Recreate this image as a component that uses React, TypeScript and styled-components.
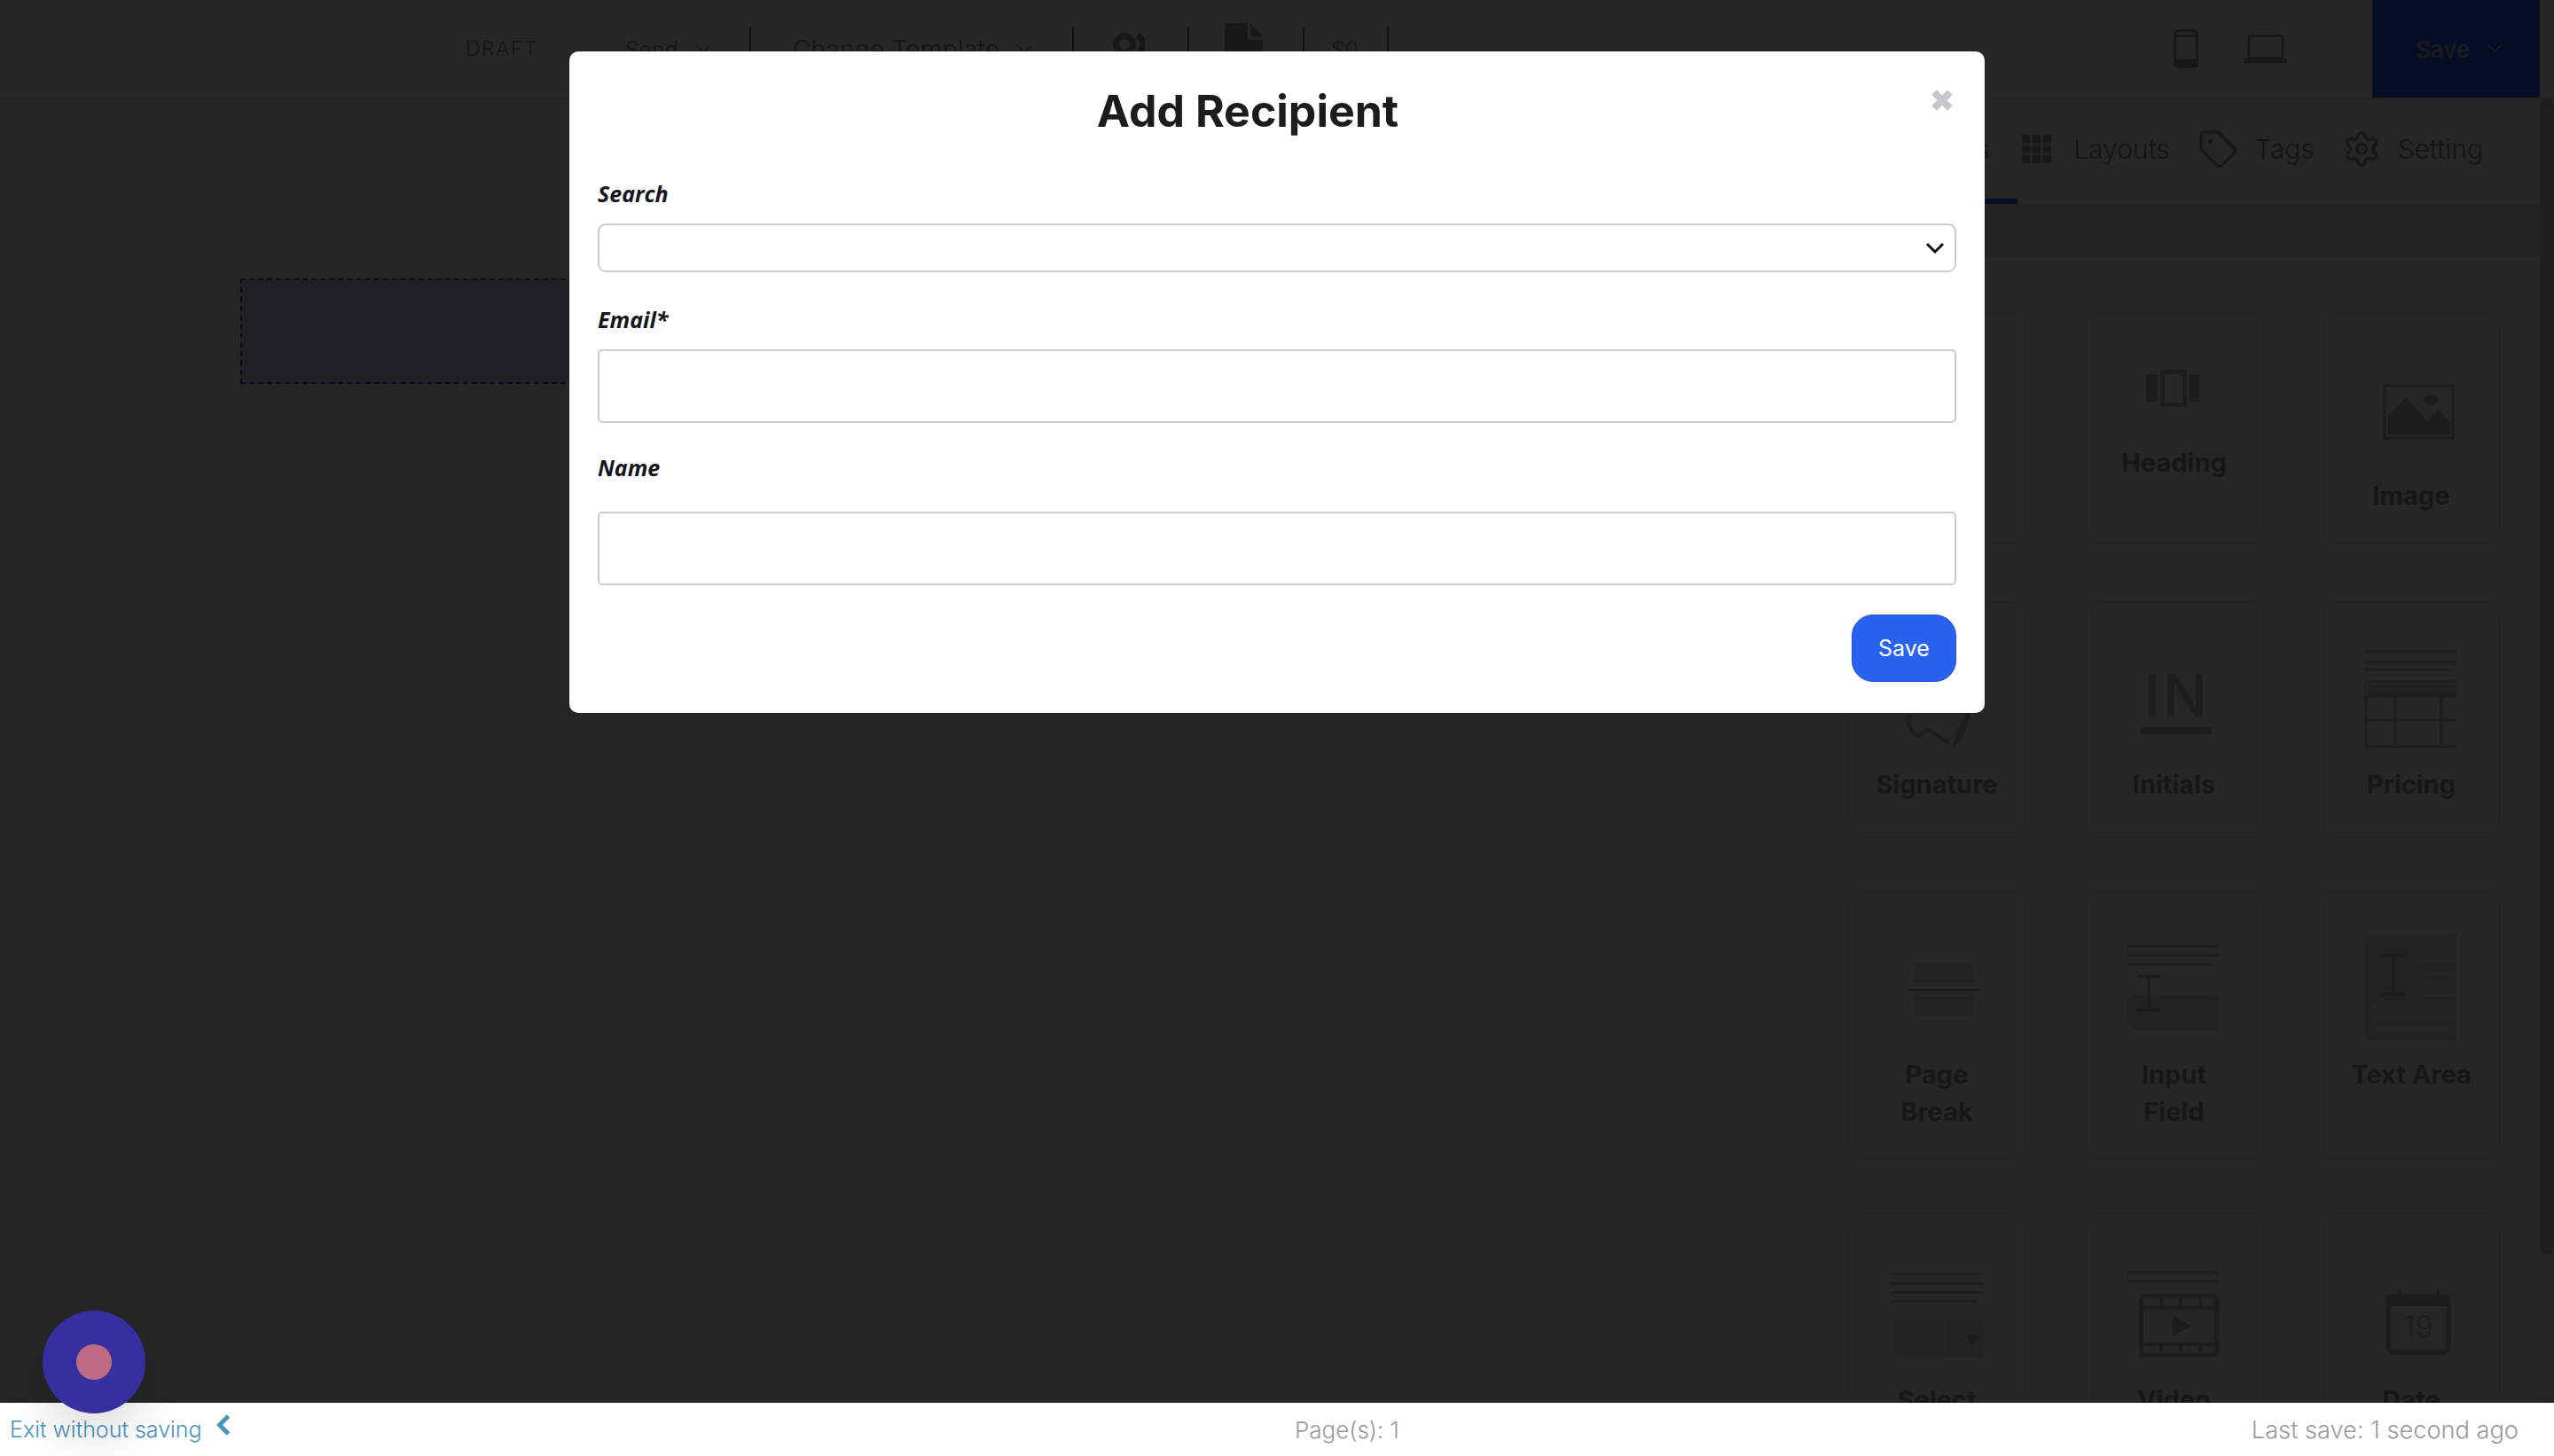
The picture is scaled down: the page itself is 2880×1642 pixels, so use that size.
import React from "react";
import styled, { createGlobalStyle } from "styled-components";
import { ChevronDown, Settings, Tag } from "lucide-react";

const Global = createGlobalStyle`
  html, body { margin: 0; padding: 0; height: 100%; overflow: hidden; background: #fff; }
  * { box-sizing: border-box; }
  body { font-family: Inter, "Liberation Sans", sans-serif; }
`;

const Page = styled.div`
  width: 2880px;
  height: 1642px;
  display: flex;
  flex-direction: column;
  overflow: hidden;
  background: #fff;
  color: #a0a0a0;
`;

const TopBar = styled.header`
  height: 112px;
  flex: none;
  display: flex;
  align-items: center;
  padding-left: 525px;
  padding-right: 16px;
  border-bottom: 2px solid #e8e8e8;
  font-weight: 300;
  font-size: 25px;
  color: #8c8c8c;
`;

const Draft = styled.span`
  font-size: 23px;
  letter-spacing: 1.4px;
  margin-right: 98px;
`;

const BarItem = styled.span<{ $width: number; $size?: number }>`
  display: flex;
  align-items: center;
  gap: 16px;
  flex: none;
  width: ${(p) => p.$width}px;
  height: 49px;
  align-self: flex-start;
  margin-top: 31px;
  font-size: ${(p) => p.$size ?? 25}px;
  white-space: nowrap;
`;

const Divider = styled.i<{ $gap: number }>`
  display: block;
  flex: none;
  width: 2px;
  height: 50px;
  align-self: flex-start;
  margin-top: 31px;
  margin-right: ${(p) => p.$gap}px;
  background: #6c6c6c;
`;

const DeviceGroup = styled.div`
  margin-left: auto;
  display: flex;
  align-items: center;
  gap: 52px;
  margin-right: 96px;
`;

const HeaderSave = styled.div`
  width: 189px;
  height: 110px;
  display: flex;
  align-items: center;
  justify-content: center;
  gap: 16px;
  padding-left: 10px;
  background: #2962ff;
  color: #b8b8b8;
  font-size: 26px;
  font-weight: 500;
`;

const Main = styled.div`
  flex: 1;
  min-height: 0;
  display: flex;
`;

const Canvas = styled.div`
  flex: 1;
  min-width: 0;
  padding: 202px 0 0 271px;
`;

const DropZone = styled.div`
  width: 1540px;
  height: 119px;
  background: #dcdfec;
  border: 2px dashed #6060d8;
`;

const SidePanel = styled.aside`
  width: 814px;
  flex: none;
  display: flex;
  flex-direction: column;
  border-left: 1px solid #eeeeee;
  min-height: 0;
`;

const Tabs = styled.nav`
  height: 118px;
  flex: none;
  display: flex;
  justify-content: flex-end;
  align-items: stretch;
  gap: 31px;
  padding-right: 64px;
`;

const TabItem = styled.div<{ $active?: boolean; $gap?: number }>`
  display: flex;
  align-items: center;
  gap: ${(p) => p.$gap ?? 19}px;
  font-size: 30px;
  font-weight: 300;
  color: #8c8c8c;
  padding-bottom: 6px;
  ${(p) =>
    p.$active &&
    `border-bottom: 6px solid #2962ff; padding-right: 32px; margin-right: -26px; padding-bottom: 0;`}
`;

const Band = styled.div`
  height: 60px;
  flex: none;
  background: #e4e4e4;
`;

const CardGrid = styled.div`
  display: grid;
  grid-template-columns: repeat(3, 200px);
  grid-template-rows: 259px 260px 300px 300px;
  column-gap: 67.5px;
  row-gap: 67px;
  padding: 63px 0 0 33px;
`;

const Card = styled.div`
  border: 1px solid #e4e4e4;
  border-radius: 10px;
  display: flex;
  flex-direction: column;
  align-items: center;
`;

const CardArt = styled.svg`
  display: block;
  flex: none;
  margin: -1px 0 0 -1px;
`;

const CardLabel = styled.div`
  font-size: 29px;
  font-weight: 700;
  line-height: 42px;
  text-align: center;
  white-space: nowrap;
  color: #9a9a9a;
`;

const ScrollTrack = styled.div`
  width: 16px;
  flex: none;
  background: #f4f4f4;
`;

const ScrollThumb = styled.div`
  height: 1303px;
  border-radius: 8px;
  background: #c8c8c8;
`;

const Footer = styled.footer`
  position: relative;
  z-index: 20;
  height: 60px;
  flex: none;
  display: flex;
  align-items: center;
  padding: 0 40px 0 11px;
  background: #fff;
  font-size: 25px;
  font-weight: 300;
  color: #9a9a9a;
`;

const ExitGroup = styled.div`
  flex: 0 0 1449px;
  display: flex;
  align-items: center;
  gap: 16px;
  color: #4a93bb;
  svg { margin-bottom: 10px; }
`;

const PageCount = styled.span`
  flex: 1;
  font-size: 26px;
`;

const LastSave = styled.span`
  font-size: 27.2px;
`;

const Recorder = styled.div`
  position: fixed;
  z-index: 30;
  left: 48px;
  top: 1478px;
  width: 116px;
  height: 116px;
  border-radius: 50%;
  background: #372fa0;
  display: flex;
  align-items: center;
  justify-content: center;
  box-shadow: 0 28px 50px rgba(0, 0, 0, 0.12);
`;

const RecorderDot = styled.div`
  width: 40px;
  height: 40px;
  border-radius: 50%;
  background: #c06b85;
`;

const Overlay = styled.div`
  position: fixed;
  inset: 0;
  z-index: 10;
  background: rgba(0, 0, 0, 0.85);
  padding: 58px 0 0 642px;
`;

const Modal = styled.section`
  width: 1596px;
  height: 746px;
  background: #fff;
  border-radius: 10px;
  padding: 0 32px;
  position: relative;
`;

const ModalTitle = styled.h2`
  margin: 0;
  padding: 39px 66px 0 0;
  height: 142px;
  text-align: center;
  font-size: 50px;
  line-height: 56px;
  font-weight: 700;
  color: #1c1c1c;
`;

const CloseButton = styled.button`
  position: absolute;
  top: 43px;
  right: 36px;
  width: 24px;
  height: 24px;
  padding: 0;
  border: 0;
  background: none;
  display: block;
`;

const FieldLabel = styled.label<{ $gap: number; $top: number }>`
  display: block;
  margin: ${(p) => p.$top}px 0 ${(p) => p.$gap}px;
  font-family: "Open Sans", "Liberation Sans", sans-serif;
  font-style: italic;
  font-weight: 700;
  font-size: 25px;
  line-height: 36px;
  color: #16161e;
`;

const SelectBox = styled.div`
  height: 55px;
  border: 2px solid #cdcdcd;
  border-radius: 9px;
  display: flex;
  align-items: center;
  justify-content: flex-end;
  padding-right: 11px;
`;

const TextInput = styled.input`
  display: block;
  width: 100%;
  height: 83px;
  border: 2px solid #cdcdcd;
  border-radius: 5px;
  background: #fff;
  outline: none;
`;

const ModalActions = styled.div`
  display: flex;
  justify-content: flex-end;
  margin-top: 33px;
`;

const SaveButton = styled.button`
  width: 118px;
  height: 76px;
  border: 1px solid #2454d0;
  border-radius: 24px;
  background: #2962ef;
  color: #fff;
  font-family: inherit;
  font-size: 25px;
  font-weight: 400;
`;

const ICON = "#c0c0c0";
const LINE = "#d2d2d2";
const LIGHT = "#e2e2e2";
const MID = "#eeeeee";
const BAR_ICON = "#a0a0a0";

const Art = ({ h = 185, children }: { h?: number; children?: React.ReactNode }) => (
  <CardArt width="200" height={h} viewBox={`0 0 200 ${h}`}>
    {children}
  </CardArt>
);

const Lines = ({ x, w, ys, last }: { x: number; w: number; ys: number[]; last?: number }) => (
  <>
    {ys.map((y, i) => (
      <rect key={y} x={x} y={y} width={i === ys.length - 1 && last ? last : w} height={3} fill={LINE} />
    ))}
  </>
);

const cards: { label: React.ReactNode; art: React.ReactNode }[] = [
  { label: "Text", art: <Art /> },
  {
    label: "Heading",
    art: (
      <Art h={148}>
        <rect x="69" y="69" width="13" height="31" fill={ICON} />
        <rect x="87.5" y="66.5" width="25" height="37" fill="none" stroke={ICON} strokeWidth="5" />
        <rect x="118" y="69" width="11" height="31" fill={ICON} />
      </Art>
    ),
  },
  {
    label: "Image",
    art: (
      <Art>
        <rect x="70" y="82" width="77" height="59" fill="none" stroke={ICON} strokeWidth="3" />
        <path d="M74 137v-22l20-20 24 26 12-13 14 15v14z" fill={ICON} />
        <ellipse cx="122" cy="98" rx="9" ry="5" fill={ICON} />
      </Art>
    ),
  },
  {
    label: "Signature",
    art: (
      <Art>
        <path d="M70 128c-4 12 2 22 10 22 6 0 6-10 14-4 8 4 10 10 20 12" fill="none" stroke={ICON} strokeWidth="5" />
        <path d="M118 164l4-18 18-36 3 2-14 42z" fill={ICON} />
      </Art>
    ),
  },
  {
    label: "Initials",
    art: (
      <Art>
        <text x="67" y="129" fontFamily="Inter, sans-serif" fontSize="66" fontWeight="500" letterSpacing="3" fill={ICON}>
          IN
        </text>
        <rect x="64" y="141" width="80" height="8" fill={ICON} />
      </Art>
    ),
  },
  {
    label: "Pricing",
    art: (
      <Art>
        <Lines x={47} w={104} ys={[54, 66, 75]} last={98} />
        <path d="M151 90H51a2 2 0 0 0-2 2v69a2 2 0 0 0 2 2h100" fill="none" stroke={ICON} strokeWidth="3" />
        <rect x="49" y="90" width="102" height="16" fill={LIGHT} />
        <path d="M49 106h102M49 133h102M82 106v57M134 106v57" stroke={ICON} strokeWidth="3" fill="none" />
      </Art>
    ),
  },
  {
    label: (
      <>
        Page
        <br />
        Break
      </>
    ),
    art: (
      <Art>
        <rect x="74" y="80" width="68" height="22" fill={LIGHT} />
        <rect x="68" y="109" width="80" height="3" fill={ICON} />
        <rect x="74" y="118" width="68" height="22" fill={LIGHT} />
      </Art>
    ),
  },
  {
    label: (
      <>
        Input
        <br />
        Field
      </>
    ),
    art: (
      <Art>
        <Lines x={48} w={103} ys={[60, 70, 80]} last={98} />
        <path d="M151 115H60a12 12 0 0 0-12 12v17a12 12 0 0 0 12 12h91z" fill={LIGHT} />
        <path d="M59 95h26M72 95v38M59 133h26" stroke={ICON} strokeWidth="4" fill="none" />
      </Art>
    ),
  },
  {
    label: "Text Area",
    art: (
      <Art>
        <path d="M151 47H58a10 10 0 0 0-10 10v101a10 10 0 0 0 10 10h93z" fill={LIGHT} />
        <path d="M66 72h28M80 72v43M66 115h28" stroke={ICON} strokeWidth="4" fill="none" />
        {[77, 91, 103, 115].map((y) => (
          <rect key={y} x="110" y={y} width="41" height="3" fill="#f8f8f8" />
        ))}
        {[127, 140, 152].map((y) => (
          <rect key={y} x="57" y={y} width={y === 152 ? 85 : 94} height="3" fill="#f8f8f8" />
        ))}
      </Art>
    ),
  },
  {
    label: "Select",
    art: (
      <Art>
        <Lines x={48} w={104} ys={[62, 73, 83, 93]} last={97} />
        <path d="M152 115H60a12 12 0 0 0-12 12v18a12 12 0 0 0 12 12h92z" fill={MID} />
        <rect x="113" y="115" width="39" height="42" fill={LIGHT} />
        <path d="M132 132h15l-7.5 14z" fill={ICON} />
      </Art>
    ),
  },
  {
    label: "Video",
    art: (
      <Art>
        <Lines x={48} w={103} ys={[60, 70]} />
        <rect x="63.5" y="88.5" width="85" height="67" rx="5" fill="none" stroke={ICON} strokeWidth="5" />
        <path d="M63 102h88M63 143h88M86 88v14M108 88v14M130 88v14M86 143v14M108 143v14M130 143v14" stroke={ICON} strokeWidth="4" fill="none" />
        <path d="M99 110l20 12-20 12z" fill={ICON} />
      </Art>
    ),
  },
  {
    label: "Date",
    art: (
      <Art>
        <rect x="74" y="89" width="68" height="63" rx="6" fill="none" stroke={ICON} strokeWidth="5" />
        <rect x="72" y="87" width="72" height="13" fill={ICON} />
        <path d="M87 82v6M130 82v6" stroke={ICON} strokeWidth="3" />
        <text x="108" y="135" textAnchor="middle" fontFamily="Inter, sans-serif" fontSize="34" fontWeight="300" fill={ICON}>
          19
        </text>
      </Art>
    ),
  },
];

const GridIcon = () => (
  <svg width="33" height="32" viewBox="0 0 33 32" fill={BAR_ICON}>
    {[0, 11.75, 23.5].map((x) =>
      [0, 11.25, 22.5].map((y) => <rect key={`${x}-${y}`} x={x} y={y} width="9.5" height="9.5" />)
    )}
  </svg>
);

const PeopleIcon = () => (
  <svg width="36" height="38" viewBox="0 0 36 38" fill="none">
    <circle cx="13" cy="13" r="9.5" stroke={BAR_ICON} strokeWidth="7" />
    <path d="M28 3c8 5 8 15 0 20" stroke={BAR_ICON} strokeWidth="7" />
  </svg>
);

const FileIcon = () => (
  <svg width="43" height="60" viewBox="0 0 43 60">
    <path d="M4 0h22v16a3 3 0 0 0 3 3h14v37a4 4 0 0 1-4 4H4a4 4 0 0 1-4-4V4a4 4 0 0 1 4-4z" fill={BAR_ICON} />
    <path d="M29 0l14 15H29z" fill={BAR_ICON} />
  </svg>
);

const PhoneIcon = () => (
  <svg width="28" height="44" viewBox="0 0 28 44" fill="none">
    <rect x="1.5" y="1.5" width="25" height="41" rx="4" stroke={BAR_ICON} strokeWidth="3" />
    <rect x="2" y="6" width="24" height="3" fill={BAR_ICON} />
    <rect x="2" y="34" width="24" height="9" fill={BAR_ICON} />
  </svg>
);

const LaptopIcon = () => (
  <svg width="48" height="32" viewBox="0 0 48 32" fill="none">
    <rect x="5" y="1.5" width="38" height="25" rx="2" stroke={BAR_ICON} strokeWidth="3" />
    <rect x="0" y="27" width="48" height="5" fill={BAR_ICON} />
  </svg>
);

const CloseGlyph = () => (
  <svg width="24" height="24" viewBox="0 0 24 24">
    <path d="M3 3l18 18M21 3L3 21" stroke="#c8c8cc" strokeWidth="8" />
  </svg>
);

const BackChevron = () => (
  <svg width="16" height="24" viewBox="0 0 16 24" fill="none">
    <path d="M13.5 2L3.5 12l10 10" stroke="#4a93bb" strokeWidth="5" />
  </svg>
);

export default function App() {
  return (
    <>
      <Global />
      <Page>
        <TopBar>
          <Draft>DRAFT</Draft>
          <BarItem $width={140}>
            Send <ChevronDown size={24} strokeWidth={1.5} />
          </BarItem>
          <Divider $gap={47} />
          <BarItem $width={315} $size={28.5}>
            Change Template <ChevronDown size={24} strokeWidth={1.5} />
          </BarItem>
          <Divider $gap={44} />
          <BarItem $width={84}>
            <PeopleIcon />
          </BarItem>
          <Divider $gap={40} />
          <BarItem $width={88}>
            <FileIcon />
          </BarItem>
          <Divider $gap={30} />
          <BarItem $width={63}>$0</BarItem>
          <Divider $gap={0} />
          <DeviceGroup>
            <PhoneIcon />
            <LaptopIcon />
          </DeviceGroup>
          <HeaderSave>
            Save <ChevronDown size={24} strokeWidth={1.5} />
          </HeaderSave>
        </TopBar>
        <Main>
          <Canvas>
            <DropZone />
          </Canvas>
          <SidePanel>
            <Tabs>
              <TabItem $active>Elements</TabItem>
              <TabItem $gap={25}>
                <GridIcon />
                Layouts
              </TabItem>
              <TabItem>
                <Tag size={46} strokeWidth={1.7} color={BAR_ICON} />
                Tags
              </TabItem>
              <TabItem>
                <Settings size={44} strokeWidth={1.9} color={BAR_ICON} />
                Setting
              </TabItem>
            </Tabs>
            <Band />
            <CardGrid>
              {cards.map((c, i) => (
                <Card key={i}>
                  {c.art}
                  <CardLabel>{c.label}</CardLabel>
                </Card>
              ))}
            </CardGrid>
          </SidePanel>
          <ScrollTrack>
            <ScrollThumb />
          </ScrollTrack>
        </Main>
        <Footer>
          <ExitGroup>
            Exit without saving
            <BackChevron />
          </ExitGroup>
          <PageCount>Page(s): 1</PageCount>
          <LastSave>Last save: 1 second ago</LastSave>
        </Footer>
      </Page>
      <Overlay>
        <Modal>
          <ModalTitle>Add Recipient</ModalTitle>
          <CloseButton aria-label="Close">
            <CloseGlyph />
          </CloseButton>
          <FieldLabel $top={0} $gap={16}>
            Search
          </FieldLabel>
          <SelectBox>
            <svg width="22" height="14" viewBox="0 0 22 14" fill="none">
              <path d="M2 2l9 9 9-9" stroke="#111" strokeWidth="3" />
            </svg>
          </SelectBox>
          <FieldLabel $top={35} $gap={16}>
            Email*
          </FieldLabel>
          <TextInput />
          <FieldLabel $top={32} $gap={32}>
            Name
          </FieldLabel>
          <TextInput />
          <ModalActions>
            <SaveButton>Save</SaveButton>
          </ModalActions>
        </Modal>
      </Overlay>
      <Recorder>
        <RecorderDot />
      </Recorder>
    </>
  );
}
